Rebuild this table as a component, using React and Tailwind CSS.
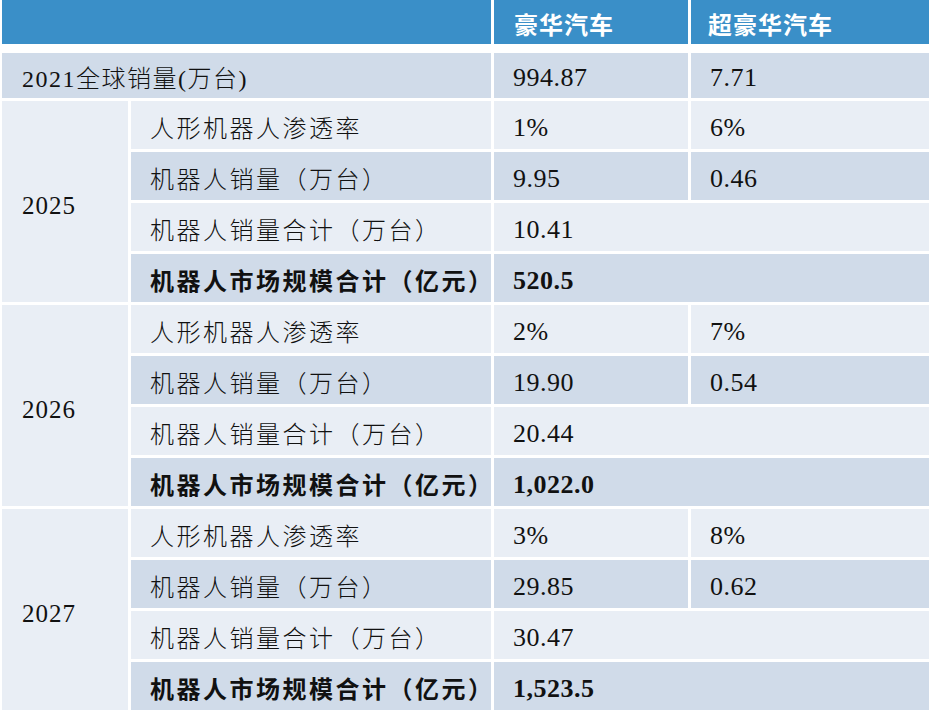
import React from 'react';

const groups = [
  { year: '2025', rate: ['1%', '6%'], sales: ['9.95', '0.46'], total: '10.41', market: '520.5' },
  { year: '2026', rate: ['2%', '7%'], sales: ['19.90', '0.54'], total: '20.44', market: '1,022.0' },
  { year: '2027', rate: ['3%', '8%'], sales: ['29.85', '0.62'], total: '30.47', market: '1,523.5' },
];

const light = 'bg-[#e9eef5]';
const dark = 'bg-[#d0dbe9]';

function Label({ children, bg, bold }) {
  return (
    <div className={`${bg} flex items-center pl-[19px] pt-[8px] text-[24px] tracking-[2.5px] text-[#111] ${bold ? 'font-bold' : 'font-light'}`}>
      {children}
    </div>
  );
}

function Num({ children, bg, bold, span }) {
  return (
    <div className={`${bg} ${span ? 'col-span-2' : ''} flex items-center pl-[19px] pt-[4px] text-[26px] tracking-[0.5px] text-[#111] ${bold ? 'font-bold' : ''}`}>
      {children}
    </div>
  );
}

export default function App() {
  return (
    <div
      className="w-[931px] h-[716px] bg-white pl-[2px] overflow-hidden"
      style={{ fontFamily: '"Liberation Serif", "Noto Sans CJK SC", serif' }}
    >
      {/* header */}
      <div className="grid grid-cols-[489px_194px_238px] gap-[3px] h-[44px]">
        <div className="bg-[#3a8fc8]" />
        <div className="bg-[#3a8fc8] flex items-center pl-[20px] pt-[8px] text-white font-bold text-[24px] tracking-[1px]">豪华汽车</div>
        <div className="bg-[#3a8fc8] flex items-center pl-[17px] pt-[8px] text-white font-bold text-[24px] tracking-[1px]">超豪华汽车</div>
      </div>

      <div className="mt-[9px] grid grid-cols-[126px_360px_194px_238px] grid-rows-[45px_repeat(12,48px)] gap-[3px]">
        <div className={`${dark} col-span-2 flex items-center pl-[20px] pt-[6px] text-[24px] tracking-[1.5px] font-light text-[#111]`}>
          2021全球销量(万台)
        </div>
        <Num bg={dark}>994.87</Num>
        <Num bg={dark}>7.71</Num>

        {groups.map((g) => (
          <React.Fragment key={g.year}>
            <div className={`${light} row-span-4 flex items-center pl-[20px] pt-[8px] text-[25px] tracking-[1px] text-[#111]`}>
              {g.year}
            </div>
            <Label bg={light}>人形机器人渗透率</Label>
            <Num bg={light}>{g.rate[0]}</Num>
            <Num bg={light}>{g.rate[1]}</Num>

            <Label bg={dark}>机器人销量（万台）</Label>
            <Num bg={dark}>{g.sales[0]}</Num>
            <Num bg={dark}>{g.sales[1]}</Num>

            <Label bg={light}>机器人销量合计（万台）</Label>
            <Num bg={light} span>{g.total}</Num>

            <Label bg={dark} bold>机器人市场规模合计（亿元）</Label>
            <Num bg={dark} span bold>{g.market}</Num>
          </React.Fragment>
        ))}
      </div>
    </div>
  );
}
